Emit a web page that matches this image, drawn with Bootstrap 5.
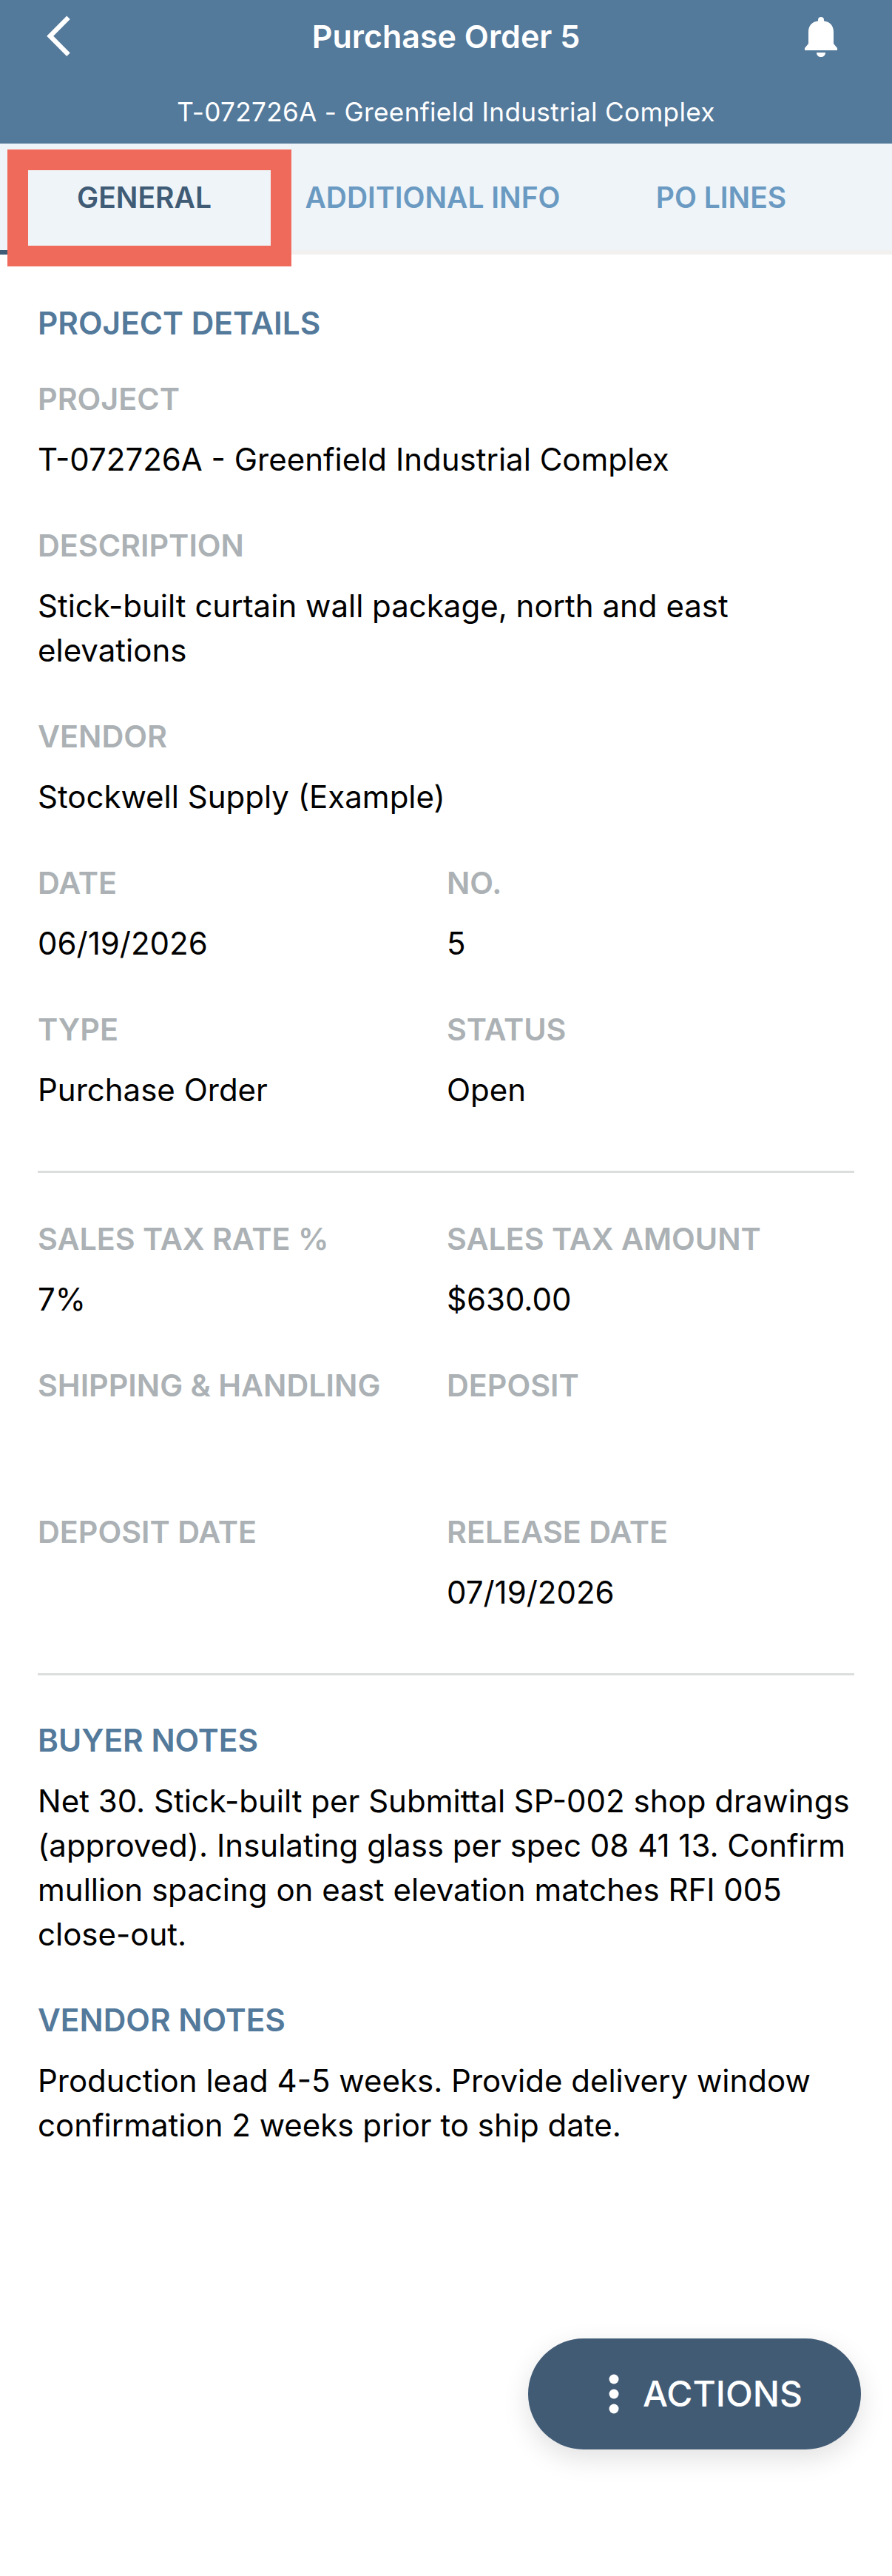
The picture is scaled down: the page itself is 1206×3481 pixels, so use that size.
<!DOCTYPE html>
<html lang="en">
<head>
  <meta charset="UTF-8" />
  <meta name="viewport" content="width=device-width, initial-scale=1" />
  <title>Purchase Order 5</title>
  <link href="https://cdn.jsdelivr.net/npm/bootstrap@5.3.0/dist/css/bootstrap.min.css" rel="stylesheet" />
  <style>
    body {
      font-family: Inter, "Liberation Sans", sans-serif;
      background: #fff;
      color: #000;
      height: 3481px;
      overflow: hidden;
      position: relative;
    }

    /* Top bar */
    .po-header {
      background-color: #53799b;
      color: #fff;
      height: 194px;
    }
    .po-title { font-size: 43px; font-weight: 600; line-height: 50px; padding-top: 24px; }
    .po-sub { font-size: 35.2px; line-height: 42px; margin-top: 56px; letter-spacing: .3px; }
    .po-icon { position: absolute; }
    .icon-back { left: 60px; top: 20px; }
    .icon-bell { left: 1088px; top: 23px; }

    /* Tabs */
    .po-tabs {
      background-color: #eff4f8;
      height: 150px;
      border-bottom: 6px solid #f3f1ef;
      padding-right: 36px;
      position: relative;
    }
    .po-tab {
      flex: 1;
      font-size: 39px;
      font-weight: 600;
      line-height: 46px;
      color: #6a9ac2;
      padding-top: 50px;
      text-align: center;
    }
    .po-tab.on { color: #3f5b75; }
    .tab-line { position: absolute; left: 0; bottom: -6px; width: 390px; height: 6px; background: #3f5b75; }
    .red-box { position: absolute; left: 10px; top: 202px; width: 384px; height: 158px; border: solid #f06a5c; border-width: 28px; }

    /* Body */
    .po-body { padding: 63px 51px 0 51px; }
    .sec-head { font-size: 42.4px; font-weight: 600; line-height: 60px; color: #53799b; }
    .fld-label { font-size: 41.3px; font-weight: 600; line-height: 60px; color: #abb1b4; margin-top: 56px; }
    .fld-label.first { margin-top: 42px; }
    .fld-label.under-rule { margin-top: 59px; }
    .fld-val { font-size: 42px; line-height: 60px; min-height: 60px; margin-top: 22px; }
    .po-rule { border-top: 3px solid #dcdedd; margin-top: 79px; }
    .sec-head.after-rule { margin-top: 58px; }
    .sec-head.after-text { margin-top: 56px; }
    .col-a { width: 553px; }

    .actions-btn {
      position: absolute;
      left: 714px;
      top: 3160px;
      width: 450px;
      height: 150px;
      padding: 0 0 0 30px;
      border-radius: 75px;
      background: #415b75;
      color: #fff;
      font-size: 48px;
      font-weight: 500;
      border: 0;
      box-shadow: 0 12px 36px rgba(0, 0, 0, .12);
    }
    .dots { width: 14px; margin-right: 32px; }
  </style>
</head>
<body>

<!-- Header -->
<header class="po-header text-center">
  <svg class="po-icon icon-back" width="40" height="60" viewBox="0 0 40 60" fill="none" stroke="#fff" stroke-width="6.4"><path d="M32.5 3.7 7.7 28.7l24.8 25"/></svg>
  <div class="po-title">Purchase Order 5</div>
  <svg class="po-icon icon-bell" width="44" height="54" viewBox="0 0 44 54" fill="#fff"><circle cx="22" cy="4" r="4"/><path d="M5 20C5 10 12 5 22 5s17 5 17 15v16l5 6v3H0v-3l5-6zM16 48h12c0 4-3 6-6 6s-6-2-6-6z"/></svg>
  <div class="po-sub">T-072726A - Greenfield Industrial Complex</div>
</header>

<!-- Tabs -->
<nav class="po-tabs d-flex">
  <div class="po-tab on">GENERAL</div>
  <div class="po-tab">ADDITIONAL INFO</div>
  <div class="po-tab">PO LINES</div>
  <div class="tab-line"></div>
</nav>
<div class="red-box"></div>

<!-- Main -->
<main class="po-body">
  <div class="sec-head">PROJECT DETAILS</div>
  <div class="fld-label first">PROJECT</div>
  <div class="fld-val">T-072726A - Greenfield Industrial Complex</div>
  <div class="fld-label">DESCRIPTION</div>
  <div class="fld-val">Stick-built curtain wall package, north and east elevations</div>
  <div class="fld-label">VENDOR</div>
  <div class="fld-val">Stockwell Supply (Example)</div>

  <div class="d-flex">
    <div class="col-a"><div class="fld-label">DATE</div><div class="fld-val">06/19/2026</div></div>
    <div><div class="fld-label">NO.</div><div class="fld-val">5</div></div>
  </div>
  <div class="d-flex">
    <div class="col-a"><div class="fld-label">TYPE</div><div class="fld-val">Purchase Order</div></div>
    <div><div class="fld-label">STATUS</div><div class="fld-val">Open</div></div>
  </div>

  <div class="po-rule"></div>

  <div class="d-flex">
    <div class="col-a"><div class="fld-label under-rule">SALES TAX RATE %</div><div class="fld-val">7%</div></div>
    <div><div class="fld-label under-rule">SALES TAX AMOUNT</div><div class="fld-val">$630.00</div></div>
  </div>
  <div class="d-flex">
    <div class="col-a"><div class="fld-label">SHIPPING &amp; HANDLING</div><div class="fld-val"></div></div>
    <div><div class="fld-label">DEPOSIT</div><div class="fld-val"></div></div>
  </div>
  <div class="d-flex">
    <div class="col-a"><div class="fld-label">DEPOSIT DATE</div><div class="fld-val"></div></div>
    <div><div class="fld-label">RELEASE DATE</div><div class="fld-val">07/19/2026</div></div>
  </div>

  <div class="po-rule"></div>

  <div class="sec-head after-rule">BUYER NOTES</div>
  <div class="fld-val">Net 30. Stick-built per Submittal SP-002 shop drawings (approved). Insulating glass per spec 08 41 13. Confirm mullion spacing on east elevation matches RFI 005 close-out.</div>
  <div class="sec-head after-text">VENDOR NOTES</div>
  <div class="fld-val">Production lead 4-5 weeks. Provide delivery window confirmation 2 weeks prior to ship date.</div>
</main>

<button class="actions-btn d-flex align-items-center justify-content-center">
  <svg class="dots" width="14" height="54" viewBox="0 0 14 54" fill="#fff"><circle cx="7" cy="7" r="6.5"/><circle cx="7" cy="27" r="6.5"/><circle cx="7" cy="47" r="6.5"/></svg>
  <span>ACTIONS</span>
</button>

</body>
</html>
